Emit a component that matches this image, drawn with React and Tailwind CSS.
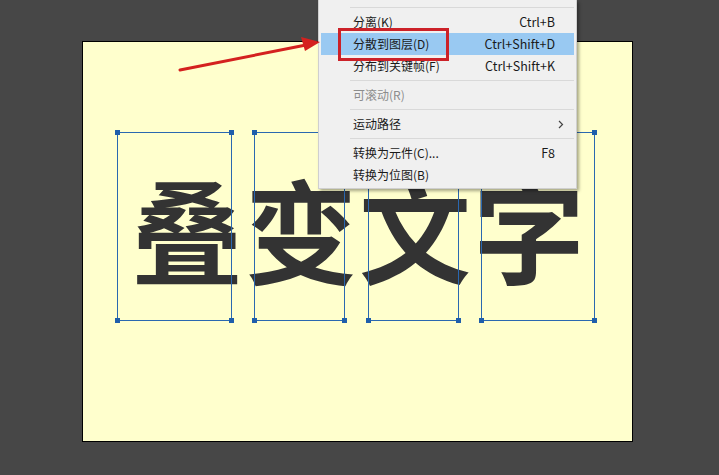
import React from 'react'

const boxes = [
  { left: 34, width: 115 },
  { left: 171, width: 91 },
  { left: 285, width: 91 },
  { left: 398, width: 114 },
]

const cjk = { fontFamily: '"Noto Sans CJK SC", "Noto Sans", sans-serif' }

function Handle({ className }) {
  return <div className={`absolute w-[5px] h-[5px] bg-[#1f5eab] ${className}`} />
}

function BoundBox({ left, width }) {
  return (
    <div
      className="absolute top-[90px] h-[189px] border border-[#2a68b0]"
      style={{ left, width }}
    >
      <Handle className="-left-[3px] -top-[3px]" />
      <Handle className="-right-[3px] -top-[3px]" />
      <Handle className="-left-[3px] -bottom-[3px]" />
      <Handle className="-right-[3px] -bottom-[3px]" />
    </div>
  )
}

function Sep() {
  return (
    <div className="h-[7px] flex items-center pl-[31px] pr-[2px]">
      <div className="h-px w-full bg-[#d9d9d9]" />
    </div>
  )
}

function Item({ label, shortcut, active, disabled, sub }) {
  return (
    <div
      className={`h-[22px] mx-[2px] flex items-center justify-between pl-[32px] ${sub ? 'pr-[10px]' : 'pr-[19px]'} ${active ? 'bg-[#99c9f2]' : ''}`}
    >
      <span className={`text-[12px] leading-none ${disabled ? 'text-[#8c8c8c]' : 'text-[#1a1a1a]'}`}>{label}</span>
      {shortcut && <span className="text-[12.5px] leading-none text-[#1a1a1a]">{shortcut}</span>}
      {sub && (
        <svg width="6" height="9" viewBox="0 0 6 9" className="text-[#444]">
          <path d="M1 1l3.5 3.5L1 8" fill="none" stroke="currentColor" strokeWidth="1.2" />
        </svg>
      )}
    </div>
  )
}

export default function App() {
  return (
    <div className="relative w-[719px] h-[475px] bg-[#474747] overflow-hidden" style={cjk}>
      {/* stage */}
      <div className="relative ml-[82px] mt-[41px] w-[551px] h-[401px] border border-black bg-[#ffffcd] pt-[129px]">
        <div className="flex pl-[48px] text-[112px] leading-none font-bold text-[#333333] tracking-[2px]">
          <span>叠</span>
          <span>变</span>
          <span>文</span>
          <span>字</span>
        </div>
        {boxes.map((b, i) => (
          <BoundBox key={i} {...b} />
        ))}
      </div>

      {/* context menu */}
      <div className="absolute left-[318px] top-0 w-[259px] h-[189px] bg-[#f0f0f0] border border-[#cfcfcf] border-t-0 shadow-[2px_2px_3px_rgba(0,0,0,0.35)] pt-[4px]">
        <Sep />
        <Item label="分离(K)" shortcut="Ctrl+B" />
        <Item label="分散到图层(D)" shortcut="Ctrl+Shift+D" active />
        <Item label="分布到关键帧(F)" shortcut="Ctrl+Shift+K" />
        <Sep />
        <Item label="可滚动(R)" disabled />
        <Sep />
        <Item label="运动路径" sub />
        <Sep />
        <Item label="转换为元件(C)..." shortcut="F8" />
        <Item label="转换为位图(B)" />
      </div>

      {/* highlight frame */}
      <div className="absolute left-[338px] top-[28px] w-[111px] h-[33px] border-[3px] border-[#cc2128]" />

      {/* arrow */}
      <svg className="absolute left-0 top-0" width="719" height="475" viewBox="0 0 719 475">
        <path d="M180 70L306 45" stroke="#d4211f" strokeWidth="3" strokeLinecap="round" />
        <polygon points="320,42 301,37 305,51" fill="#d4211f" />
      </svg>
    </div>
  )
}
